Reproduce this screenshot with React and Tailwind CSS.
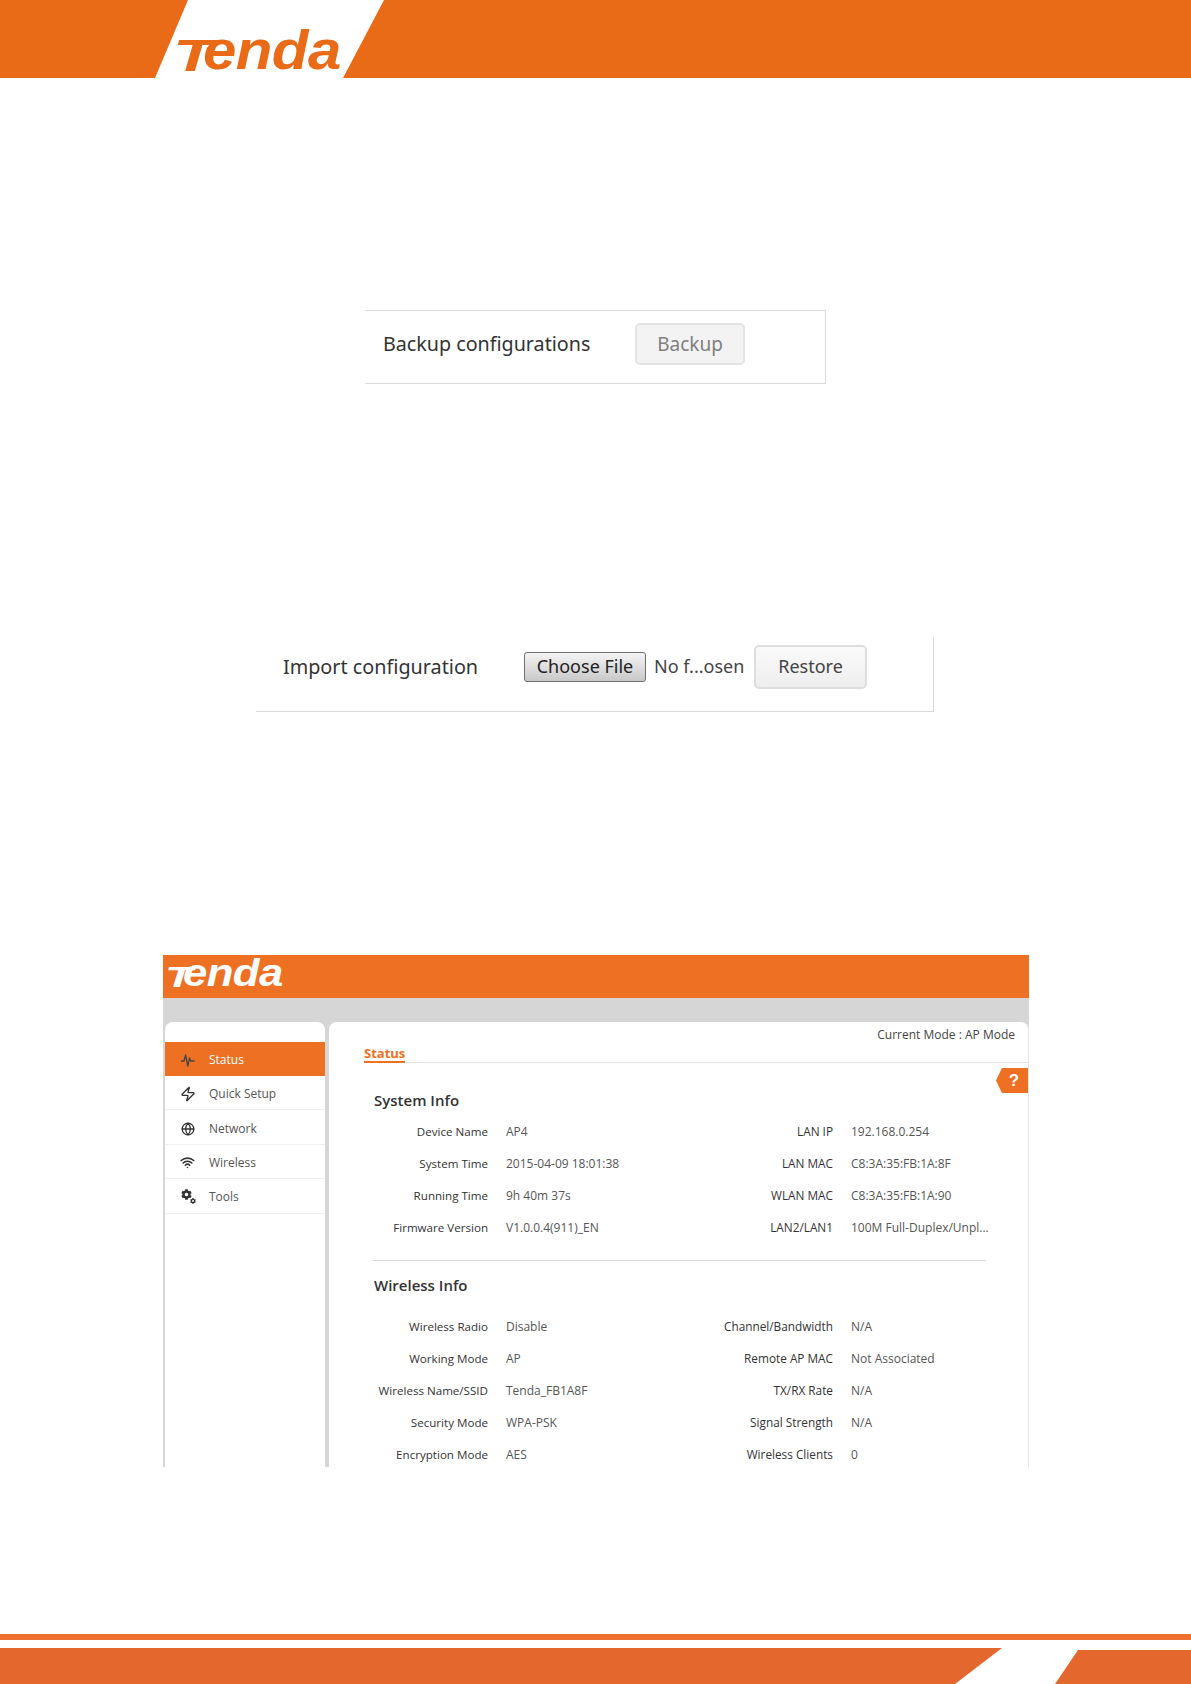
import React from 'react'
import { Zap, Globe, Wifi } from 'lucide-react'
import { FaCog } from 'react-icons/fa'

const PulseIcon = () => (
  <svg width="16" height="16" viewBox="0 0 16 16" fill="none" stroke="currentColor" strokeWidth="1.3" strokeLinejoin="round">
    <path d="M1 9h3l1.6-6 2.2 11 1.8-8 1 3h4" />
  </svg>
)

const GearsIcon = () => (
  <svg width="16" height="16" viewBox="0 0 16 16" fill="currentColor">
    <FaCog x={1} y={0} size={11} />
    <FaCog x={10} y={9} size={6} />
  </svg>
)

const menu = [
  { name: 'Status', icon: <PulseIcon />, active: true },
  { name: 'Quick Setup', icon: <Zap size={16} strokeWidth={2} /> },
  { name: 'Network', icon: <Globe size={14} strokeWidth={2.2} /> },
  { name: 'Wireless', icon: <Wifi size={15} strokeWidth={2.6} /> },
  { name: 'Tools', icon: <GearsIcon /> },
]

const systemInfo = [
  ['Device Name', 'AP4', 'LAN IP', '192.168.0.254'],
  ['System Time', '2015-04-09 18:01:38', 'LAN MAC', 'C8:3A:35:FB:1A:8F'],
  ['Running Time', '9h 40m 37s', 'WLAN MAC', 'C8:3A:35:FB:1A:90'],
  ['Firmware Version', 'V1.0.0.4(911)_EN', 'LAN2/LAN1', '100M Full-Duplex/Unpl...'],
]

const wirelessInfo = [
  ['Wireless Radio', 'Disable', 'Channel/Bandwidth', 'N/A'],
  ['Working Mode', 'AP', 'Remote AP MAC', 'Not Associated'],
  ['Wireless Name/SSID', 'Tenda_FB1A8F', 'TX/RX Rate', 'N/A'],
  ['Security Mode', 'WPA-PSK', 'Signal Strength', 'N/A'],
  ['Encryption Mode', 'AES', 'Wireless Clients', '0'],
]

const InfoRows = ({ rows }) => (
  <div>
    {rows.map((r) => (
      <div key={r[0]} className="flex h-[32px] items-center whitespace-nowrap">
        <div className="w-[114px] text-right text-[11.6px] text-[#333]">{r[0]}</div>
        <div className="ml-[18px] w-[207px] text-[12px] text-[#555]">{r[1]}</div>
        <div className="w-[120px] text-right text-[11.8px] text-[#333]">{r[2]}</div>
        <div className="ml-[18px] text-[12px] text-[#555]">{r[3]}</div>
      </div>
    ))}
  </div>
)

const App = () => {
  return (
    <div className="flex h-[1684px] w-[1191px] flex-col overflow-hidden bg-white font-['Open_Sans',sans-serif]">
      {/* top banner */}
      <div className="flex h-[78px] shrink-0">
        <div className="h-full w-[188px] bg-[#e96b17] [clip-path:polygon(0_0,100%_0,155px_100%,0_100%)]"></div>
        <div className="relative w-[155px]">
          <div className="absolute left-[-15px] top-[21px] whitespace-nowrap font-['Liberation_Sans',sans-serif] text-[56px] font-bold italic leading-[58px] text-[#e96b17]">
            <span className="inline-block origin-bottom-left scale-x-[1.2] scale-y-[0.8]">T</span>
            <span className="ml-[-4px] inline-block origin-left scale-x-[1.07] tracking-[-0.5px]">enda</span>
          </div>
        </div>
        <div className="h-full flex-1 bg-[#e96b17] [clip-path:polygon(41px_0,100%_0,100%_100%,0_100%)]"></div>
      </div>

      {/* backup box */}
      <div className="ml-[365px] mt-[232px] flex h-[74px] w-[461px] shrink-0 items-center border-y border-r border-[#d9d9d9] pb-[6px] pl-[18px]">
        <div className="w-[252px] font-['Noto_Sans',sans-serif] text-[19.7px] text-[#333]">Backup configurations</div>
        <div className="flex h-[42px] w-[110px] items-center justify-center rounded-[5px] border-2 border-[#e4e4e4] bg-[#f3f3f3] font-['Noto_Sans',sans-serif] text-[19px] text-[#808080]">Backup</div>
      </div>

      {/* import box */}
      <div className="ml-[256px] mt-[253px] flex h-[75px] w-[678px] shrink-0 items-center border-b border-r border-[#d9d9d9] pb-[15px] pl-[27px]">
        <div className="w-[241px] font-['Noto_Sans',sans-serif] text-[19.8px] text-[#333]">Import configuration</div>
        <div className="flex h-[30px] w-[122px] items-center justify-center rounded-[3px] border border-[#6f6f6f] bg-gradient-to-b from-[#f4f4f4] to-[#c9c9c9] font-['Noto_Sans',sans-serif] text-[18px] text-[#222]">Choose File</div>
        <div className="ml-[8px] w-[100px] font-['Noto_Sans',sans-serif] text-[18px] text-[#444]">No f...osen</div>
        <div className="flex h-[44px] w-[113px] items-center justify-center rounded-[5px] border-2 border-[#dedede] bg-gradient-to-b from-[#fafafa] to-[#eeeeee] font-['Noto_Sans',sans-serif] text-[18px] text-[#444]">Restore</div>
      </div>

      {/* router admin page screenshot */}
      <div className="ml-[163px] mt-[243px] flex h-[512px] w-[866px] shrink-0 flex-col overflow-hidden bg-[#d6d6d6]">
        <div className="relative h-[43px] shrink-0 bg-[#ee7022]">
          <div className="absolute left-[2px] top-0 whitespace-nowrap font-['Liberation_Sans',sans-serif] text-[38px] font-bold italic leading-[36px] text-white">
            <span className="inline-block origin-bottom-left scale-x-[1.2] scale-y-[0.8]">T</span>
            <span className="ml-[-5px] inline-block origin-left scale-x-[1.15] tracking-[-0.5px]">enda</span>
          </div>
        </div>
        <div className="flex min-h-0 flex-1 pl-[2px] pt-[24px]">
          <div className="w-[160px] shrink-0 rounded-t-lg bg-white pt-[20px]">
            {menu.map((m) => (
              <div
                key={m.name}
                className={
                  m.active
                    ? 'flex h-[34px] items-center bg-[#ee7022] pt-[2px] text-[12px] text-white'
                    : 'flex h-[34.4px] items-center border-b border-[#f0f0f0] pt-[3px] text-[12px] text-[#555]'
                }
              >
                <div className={m.active ? 'flex w-[44px] justify-center pl-[1px] text-[#444]' : 'flex w-[44px] justify-center pl-[1px] text-[#333]'}>{m.icon}</div>
                {m.name}
              </div>
            ))}
          </div>
          <div className="relative ml-[4px] flex-1 rounded-t-lg border-r border-[#e8e8e8] bg-white">
            <div className="ml-[35px] flex h-[41px] items-start justify-between border-b border-[#e5e5e5] pr-[13px]">
              <div className="mt-[23px] border-b-2 border-[#ee7022] text-[13px] font-bold leading-[16px] text-[#ee7022]">Status</div>
              <div className="mt-[4px] text-[12px] text-[#444]">Current Mode : AP Mode</div>
            </div>
            <div className="absolute right-0 top-[46px] flex h-[25px] w-[32px] items-center justify-center bg-[#ee7022] pl-[4px] font-['Liberation_Sans',sans-serif] text-[17px] font-bold text-white [clip-path:polygon(6px_0,100%_0,100%_100%,6px_100%,0_50%)]">?</div>
            <div className="ml-[45px]">
              <div className="mt-[27px] h-[20px] text-[15px] font-semibold leading-[20px] text-[#333]">System Info</div>
              <div className="mt-[6px]"><InfoRows rows={systemInfo} /></div>
              <div className="ml-[-1px] mt-[16px] w-[613px] border-t border-[#dcdcdc]"></div>
              <div className="mt-[14px] h-[20px] text-[15px] font-semibold leading-[20px] text-[#333]">Wireless Info</div>
              <div className="mt-[16px]"><InfoRows rows={wirelessInfo} /></div>
            </div>
          </div>
        </div>
      </div>

      {/* bottom banner */}
      <div className="mt-[167px] h-[6px] shrink-0 bg-[#ee7030]"></div>
      <div className="mt-[8px] flex h-[36px] shrink-0">
        <div className="h-full w-[1002px] bg-[#e4672d] [clip-path:polygon(0_0,100%_0,955px_100%,0_100%)]"></div>
        <div className="ml-[53px] h-full flex-1 bg-[#e4672d] [clip-path:polygon(23px_2px,100%_2px,100%_100%,0_100%)]"></div>
      </div>
    </div>
  )
}

export default App
